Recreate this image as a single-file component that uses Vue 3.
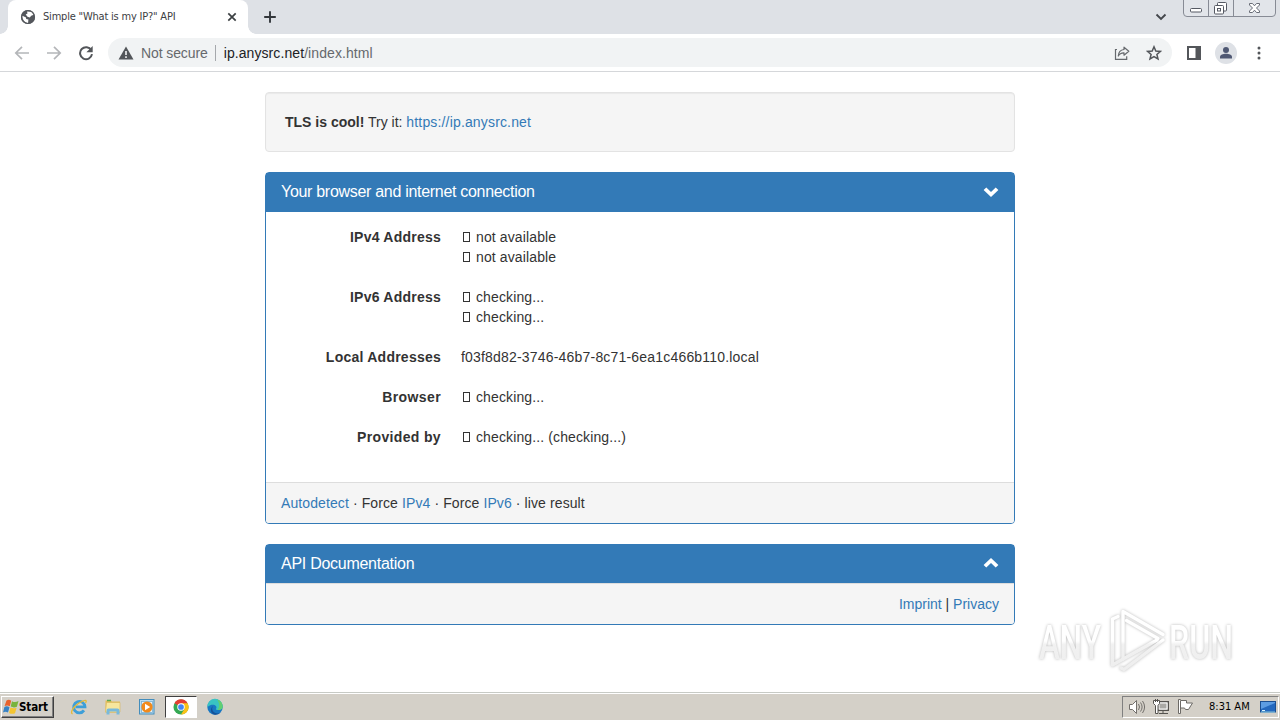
<template>
  <div class="desktop">
    <!-- Browser tab strip -->
    <header class="tab-strip">
      <div class="tab">
        <svg class="globe" viewBox="0 0 16 16" width="16" height="16">
          <circle cx="8" cy="8" r="7" fill="#54575c" />
          <path d="M2.4 6.7 6 8.4l.2 1.5 2.2.7-.3 3.4C4.6 13.5 2.2 10.5 2.4 6.7ZM7 2.4l4.5.4 2.2 3-2.5 1-1.4 1.8-2.3-.9-1.800-2.200 1.800-1Z" fill="#fff" />
          <circle cx="8" cy="8" r="6.500" fill="none" stroke="#54575c" stroke-width="1.200" />
        </svg>
        <span class="tab-title">Simple "What is my IP?" API</span>
        <svg class="tab-close" viewBox="0 0 10 10" width="10" height="10">
          <path d="M1.300 1.300 8.700 8.700M8.700 1.300 1.300 8.700" stroke="#3c4043" stroke-width="1.700" />
        </svg>
      </div>
      <svg class="new-tab" viewBox="0 0 14 14" width="14" height="14">
        <path d="M7 1.200v11.600M1.200 7h11.600" stroke="#33373c" stroke-width="1.900" />
      </svg>
      <svg class="tab-search" viewBox="0 0 12 8" width="12" height="8">
        <path d="M1.500 1.500 6 6l4.500-4.500" fill="none" stroke="#44474c" stroke-width="1.900" />
      </svg>
      <svg class="window-controls" viewBox="0 0 94 18" width="94" height="18">
        <path d="M.5 0v13q0 3.500 3.500 3.500h85q3.500 0 3.500-3.500V0M25.500 0v16.500M50.500 0v16.500" fill="#e2e5ea" stroke="#878b95" />
        <rect x="7.500" y="8.500" width="11" height="3.500" rx="1" fill="#fff" stroke="#555963" />
        <rect x="34.500" y="2.500" width="9" height="8.500" rx="1" fill="#fff" stroke="#555963" />
        <rect x="31.500" y="5.500" width="9" height="8.500" rx="1" fill="#fff" stroke="#555963" />
        <rect x="34.500" y="8.500" width="3" height="2.500" fill="#fff" stroke="#555963" />
        <path d="M66.500 3.500h3l2 2.300 2-2.300h3v1.500l-3 3 3 3v1.500h-3l-2-2.300-2 2.300h-3v-1.500l3-3-3-3Z" fill="#fff" stroke="#686c76" />
      </svg>
    </header>

    <!-- Address toolbar -->
    <nav class="toolbar">
      <svg class="nav-icon" viewBox="0 0 16 16" width="16" height="16">
        <path d="M15 8H2M8 1.800 1.800 8 8 14.200" fill="none" stroke="#b4b6b9" stroke-width="1.700" />
      </svg>
      <svg class="nav-icon" viewBox="0 0 16 16" width="16" height="16">
        <path d="M1 8h13M8 1.800 14.200 8 8 14.200" fill="none" stroke="#b4b6b9" stroke-width="1.700" />
      </svg>
      <svg class="nav-icon" viewBox="0 0 16 16" width="16" height="16">
        <path d="M13.300 5.200A6 6 0 1 0 14 9.200" fill="none" stroke="#53565a" stroke-width="2" />
        <path d="M14.700 1v6.300H8.400Z" fill="#53565a" />
      </svg>
      <div class="omnibox">
        <svg class="warning" viewBox="0 0 16 14" width="16" height="14">
          <path d="M8 .5 15.500 13.500H.5Z" fill="#53565a" />
          <path d="M8 5v4M8 10.200v1.800" stroke="#fff" stroke-width="1.500" />
        </svg>
        <span class="insecure">Not secure</span>
        <span class="divider"></span>
        <span class="url"><b>ip.anysrc.net</b>/index.html</span>
        <svg class="share" viewBox="0 0 16 16" width="16" height="16">
          <path d="M3 4.500H1.500v9.800h11.200v-3" fill="none" stroke="#66696d" stroke-width="1.200" />
          <path d="M10 2.200 14.800 6.300 10 10.200V7.800C7.500 7.700 5.500 8.700 4.300 11c.2-3.500 2.200-6.200 5.700-6.500Z" fill="none" stroke="#66696d" stroke-width="1.200" stroke-linejoin="round" />
        </svg>
        <svg class="star" viewBox="0 0 16 16" width="16" height="16">
          <path d="m8 1.800 1.800 4.200 4.600.4-3.500 3 1.100 4.500L8 11.500l-4 2.400 1.100-4.500-3.500-3 4.600-.4Z" fill="none" stroke="#53565a" stroke-width="1.500" />
        </svg>
      </div>
      <svg class="side-panel" viewBox="0 0 14 14" width="14" height="14">
        <path d="M0 0h14v14H0ZM2 2v10h6.500V2Z" fill="#53565a" fill-rule="evenodd" />
      </svg>
      <svg class="avatar" viewBox="0 0 22 22" width="22" height="22">
        <circle cx="11" cy="11" r="11" fill="#dee1e6" />
        <circle cx="11" cy="8" r="3" fill="#4f5873" />
        <path d="M5 16.500V15c0-2 3-3.200 6-3.200s6 1.200 6 3.200v1.500Z" fill="#4f5873" />
      </svg>
      <svg class="menu" viewBox="0 0 4 14" width="4" height="14">
        <circle v-for="y in [2, 7, 12]" :key="y" cx="2" :cy="y" r="1.500" fill="#53565a" />
      </svg>
    </nav>

    <!-- Page -->
    <main class="page">
      <div class="container">
        <div class="well"><strong>TLS is cool!</strong> <span class="try">Try it: <a class="tls-link">https://ip.anysrc.net</a></span></div>

        <section class="panel">
          <div class="panel-heading">
            <h3 class="browser-title">Your browser and internet connection</h3>
            <svg class="chevron" viewBox="0 0 16 10" width="16" height="10">
              <path d="M.6 3.100 3.300.4 8 4.900 12.700.4l2.700 2.700L8 10Z" fill="#fff" />
            </svg>
          </div>
          <dl class="panel-body">
            <div v-for="row in rows" :key="row.label" class="row">
              <dt :class="row.name">{{ row.label }}</dt>
              <dd>
                <div v-for="(value, i) in row.values" :key="i" class="value">
                  <i v-if="row.icon" class="missing-glyph"></i>
                  <span :class="row.textClass">{{ value }}</span>
                </div>
              </dd>
            </div>
          </dl>
          <div class="panel-footer">
            <span class="modes"><a>Autodetect</a> · Force <a>IPv4</a> · Force <a>IPv6</a> · live result</span>
          </div>
        </section>

        <section class="panel">
          <div class="panel-heading">
            <h3 class="api-title">API Documentation</h3>
            <svg class="chevron" viewBox="0 0 16 10" width="16" height="10">
              <path d="M.6 6.900 3.300 9.600 8 5.100l4.700 4.500 2.700-2.700L8 0Z" fill="#fff" />
            </svg>
          </div>
          <div class="panel-footer legal"><span><a>Imprint</a> | <a>Privacy</a></span></div>
        </section>
      </div>
    </main>

    <!-- Taskbar -->
    <footer class="taskbar">
      <button class="start">
        <svg viewBox="0 0 16 16" width="16" height="16">
          <path d="M3.500 1.500Q6 0 8.200 1.700L6.800 7.300Q4.300 5.600 1.600 7.100Z" fill="#e8622c" />
          <path d="M9 2.200Q12 4 15.500 2l-1.600 5.700q-3 1.400-6.200-.1Z" fill="#79b43d" />
          <path d="M1.400 8Q4 6.500 6.500 8.300l-1.500 5.300Q2.700 12 0 13.400Z" fill="#3682c4" />
          <path d="M7.500 8.600q3.200 1.400 6.100.1l-1.600 5.500q-3 1.400-6-.3Z" fill="#f4c531" />
        </svg>
        <span>Start</span>
      </button>
      <div class="apps">
        <span class="app">
          <svg viewBox="0 0 18 18" width="18" height="18">
            <path d="M14 12.400A5.700 5.700 0 1 1 15 8.900H5.500" fill="none" stroke="#3e9fd8" stroke-width="2.800" />
            <path d="M2.600 15.900C-.4 14.800 3.500 8.500 9 5s8.800-3.400 6.500-.2" fill="none" stroke="#e4ba38" stroke-width="1.300" />
          </svg>
        </span>
        <span class="app">
          <svg viewBox="0 0 18 18" width="18" height="18">
            <path d="M1.500 2.500H7l1 1h8v11H1.500Z" fill="#e5bd55" />
            <path d="M2.500 4.500H16V14H1.500Z" fill="#f7e69d" stroke="#d7b55c" stroke-width=".6" />
            <path d="M2.500 16.500v-4q0-2 2-2h9q2 0 2 2v4h-3v-3H5.500v3Z" fill="#79b9db" />
            <path d="M3 2.500h4" stroke="#5aa952" stroke-width="1.500" />
          </svg>
        </span>
        <span class="app">
          <svg viewBox="0 0 18 18" width="18" height="18">
            <rect x="1.500" y="1.500" width="14.500" height="14.500" fill="#b9ddf2" stroke="#438dbc" />
            <rect x="3.500" y="3.500" width="11" height="11" fill="#e5f1f8" stroke="#79afd0" stroke-width=".8" />
            <circle cx="9" cy="9" r="5.600" fill="#f18a1c" />
            <path d="m7 5.700 5.200 3.300L7 12.300Z" fill="#fff" />
          </svg>
        </span>
        <span class="app active">
          <svg viewBox="0 0 18 18" width="16" height="16">
            <circle cx="9" cy="9" r="8.500" fill="#34a853" />
            <path d="M9 9 1.600 4.700A8.500 8.500 0 0 1 16.400 4.700Z" fill="#e43e32" />
            <path d="M9 4.700h7.400A8.500 8.500 0 0 1 9 17.500l4-6.500Z" fill="#fbc116" />
            <circle cx="9" cy="9" r="4.200" fill="#fff" />
            <circle cx="9" cy="9" r="3.200" fill="#4285f4" />
          </svg>
        </span>
        <span class="app">
          <svg viewBox="0 0 18 18" width="18" height="18">
            <circle cx="9" cy="9" r="7.700" fill="#1877c2" />
            <path d="M1.300 9A7.700 7.700 0 0 1 16.700 8c.3 3-2 4.200-5.200 4-1.700-.2-2-.8-1.200-1.800C11.500 7.800 7 4.500 1.300 9Z" fill="#39c4c3" />
            <path d="M11 1.600A7.700 7.700 0 0 1 16.700 8c.3 3-2 4.200-5.200 4 2-2.500 2.500-6.500-.5-10.400Z" fill="#61cf72" />
            <path d="M7 8c-2 3 0 6.500 3.500 7.300 2 .4 4-.3 5-1.600a7.700 7.700 0 0 1-6.500 3C4 16 4 10 7 8Z" fill="#155299" />
          </svg>
        </span>
      </div>
      <div class="tray">
        <svg class="volume" viewBox="0 0 18 16" width="18" height="16">
          <path d="M1.500 5.500h3l4-4v13l-4-4h-3Z" fill="#fff" stroke="#73706c" />
          <path d="M10.500 5q2 3 0 6M12.500 3.500q3.200 4.500 0 9M14.500 2q4.200 6 0 12" fill="none" stroke="#73706c" />
        </svg>
        <svg class="network" viewBox="0 0 16 16" width="16" height="16">
          <rect x="4.500" y="2.500" width="11" height="9" fill="#aaa9a5" stroke="#55534f" />
          <path d="M6 4h8v6H6Z" stroke="#fff" fill="none" />
          <path d="M10 12v2M6 14.500h9" stroke="#55534f" />
          <path d="M.5 1.500h6v3l-1.500 2v8H2.500v-8L.5 4.500Z" fill="#fff" stroke="#55534f" />
          <path d="M2.500 0v3M4.500 0v3" stroke="#55534f" />
        </svg>
        <svg class="flag" viewBox="0 0 16 16" width="16" height="16">
          <path d="M1.500.5v14h2V9h4l1 1.500h3l4-6.500H9.500V1.500H3.500v-1Z" fill="#fff" stroke="#6d6a66" />
          <path d="M3.500 2v8" stroke="#6d6a66" />
        </svg>
        <span class="clock">8:31 AM</span>
        <svg class="show-desktop" viewBox="0 0 16 14" width="16" height="14">
          <rect x=".5" y="1.500" width="15" height="10.500" fill="#2468be" stroke="#1b4e91" />
          <path d="M1 2h14v1L1 9Z" fill="#5c9ce3" />
          <path d="M1 12h14" stroke="#8bd1ed" />
          <path d="M2 10.500h3" stroke="#d9f4ff" />
        </svg>
      </div>
    </footer>

    <!-- Watermark lying over the page -->
    <svg class="watermark" viewBox="0 0 210 76" width="210" height="76">
      <defs>
        <linearGradient id="fade" gradientUnits="userSpaceOnUse" x1="0" y1="6" x2="0" y2="66">
          <stop offset="0" stop-color="#fff" />
          <stop offset=".5" stop-color="#fff" />
          <stop offset=".56" stop-color="#f1f1f1" />
          <stop offset="1" stop-color="#eeeeee" />
        </linearGradient>
      </defs>
      <g fill="url(#fade)" class="mark-text">
        <text x="8" y="54" textLength="62" lengthAdjust="spacingAndGlyphs">ANY</text>
        <text x="138" y="54" textLength="64" lengthAdjust="spacingAndGlyphs">RUN</text>
      </g>
      <g fill="none" stroke="url(#fade)" stroke-width="3.400" stroke-linejoin="round" stroke-linecap="round">
        <path d="M87 11.500 81.500 14V60L126 35" />
        <path d="M92 54V6.500L132 29.500" />
        <path d="M95.500 15.500 127 33.500" />
        <path d="M132 35 93 64.500l-3-1.500" />
      </g>
    </svg>
  </div>
</template>

<script setup>
const rows = [
  { label: 'IPv4 Address', name: 'dt-ipv4', values: ['not available', 'not available'], icon: true, textClass: 'pending' },
  { label: 'IPv6 Address', name: 'dt-ipv6', values: ['checking...', 'checking...'], icon: true, textClass: 'pending' },
  { label: 'Local Addresses', name: 'dt-local', values: ['f03f8d82-3746-46b7-8c71-6ea1c466b110.local'], icon: false, textClass: 'local' },
  { label: 'Browser', name: 'dt-browser', values: ['checking...'], icon: true, textClass: 'pending' },
  { label: 'Provided by', name: 'dt-provider', values: ['checking... (checking...)'], icon: true, textClass: 'pending' }
]
</script>

<style>
body {
  margin: 0;
  background: #fff;
}
</style>

<style scoped>
* {
  box-sizing: border-box;
}

svg {
  display: block;
  flex: none;
}

.desktop {
  position: relative;
  display: flex;
  flex-direction: column;
  width: 1280px;
  height: 720px;
  overflow: hidden;
  background: #fff;
  font-family: 'Liberation Sans', Arial, sans-serif;
  font-size: 14px;
  line-height: 20px;
  color: #333;
  white-space: nowrap;
}

/* Tab strip */
.tab-strip {
  display: flex;
  height: 34px;
  background: #dee1e6;
}

.tab {
  position: relative;
  display: flex;
  align-items: center;
  width: 240px;
  height: 34px;
  margin-left: 8px;
  padding: 0 11px 0 12px;
  background: #fff;
  border-radius: 8px 8px 0 0;
}

.tab::before,
.tab::after {
  content: '';
  position: absolute;
  bottom: 0;
  width: 8px;
  height: 8px;
}

.tab::before {
  left: -8px;
  background: radial-gradient(circle at 0 0, transparent 7.5px, #fff 8px);
}

.tab::after {
  right: -8px;
  background: radial-gradient(circle at 100% 0, transparent 7.5px, #fff 8px);
}

.tab-title {
  flex: 1;
  margin-left: 7px;
  font-family: 'DejaVu Sans Condensed', 'DejaVu Sans', sans-serif;
  font-stretch: condensed;
  font-size: 11px;
  letter-spacing: -0.2px;
  color: #3c4043;
}

.new-tab {
  margin: 10px 0 0 15px;
}

.tab-search {
  margin: 13px 16px 0 auto;
}

.window-controls {
  margin-right: 3px;
}

/* Toolbar */
.toolbar {
  display: flex;
  align-items: center;
  height: 38px;
  padding-left: 14px;
  border-bottom: 1px solid #d5d7da;
  background: #fff;
}

.nav-icon {
  margin-right: 16px;
}

.omnibox {
  display: flex;
  align-items: center;
  width: 1064px;
  height: 29px;
  margin-left: -2px;
  padding: 0 10px;
  border-radius: 15px;
  background: #f1f3f4;
}

.insecure {
  margin-left: 7px;
  color: #66696d;
  letter-spacing: -0.1px;
}

.divider {
  width: 1px;
  height: 16px;
  margin: 0 8px 0 7px;
  background: #a5a8ac;
}

.url {
  flex: 1;
  color: #66696d;
  letter-spacing: 0.08px;
}

.url b {
  font-weight: 400;
  color: #202124;
}

.share {
  margin-right: 16px;
}

.side-panel {
  margin-left: 15px;
}

.avatar {
  margin-left: 14px;
}

.menu {
  margin-left: 20px;
}

/* Page content */
.page {
  height: 620px;
  padding-top: 20px;
}

.container {
  width: 750px;
  margin: 0 auto;
}

a {
  color: #337ab7;
}

.well {
  height: 60px;
  margin-bottom: 20px;
  padding: 19px;
  border: 1px solid #e3e3e3;
  border-radius: 4px;
  background: #f5f5f5;
  box-shadow: inset 0 1px 1px rgba(0, 0, 0, 0.05);
}

.tls-link {
  letter-spacing: 0.16px;
}

.panel {
  margin-bottom: 20px;
  border: 1px solid #337ab7;
  border-radius: 4px;
  background: #fff;
}

.panel-heading {
  display: flex;
  align-items: center;
  justify-content: space-between;
  height: 38.6px;
  padding: 0 15.5px 1px 15px;
  background: #337ab7;
}

.panel-heading h3 {
  margin: 0;
  font-size: 16px;
  font-weight: 400;
  line-height: 18px;
  letter-spacing: -0.3px;
  color: #fff;
}

.panel-heading .api-title {
  padding-top: 1px;
  letter-spacing: -0.27px;
}

.panel-body {
  display: flex;
  flex-direction: column;
  gap: 20px;
  height: 270px;
  margin: 0;
  padding: 15px;
}

.row {
  display: flex;
}

dt {
  width: 160px;
  text-align: right;
  font-weight: 700;
  letter-spacing: 0.24px;
}

.dt-browser {
  letter-spacing: 0.4px;
}

.dt-provider {
  letter-spacing: 0.35px;
}

dd {
  margin: 0 0 0 20px;
}

.value {
  display: flex;
  align-items: center;
}

.missing-glyph {
  width: 7px;
  height: 10px;
  margin: 0 6px 0 2px;
  border: 1px solid #333;
}

.pending {
  letter-spacing: 0.12px;
}

.local {
  letter-spacing: 0.19px;
}

.panel-footer {
  height: 41px;
  padding: 10px 15px;
  border-top: 1px solid #ddd;
  border-radius: 0 0 3px 3px;
  background: #f5f5f5;
}

.modes {
  letter-spacing: 0.1px;
}

.legal {
  text-align: right;
}

/* Taskbar */
.taskbar {
  display: flex;
  align-items: center;
  height: 28px;
  padding: 2px 1px 2px;
  background: #d4d0c8;
  border-top: 1px solid #c7cac5;
  box-shadow: inset 0 1px #fff;
}

.start {
  display: flex;
  align-items: center;
  width: 53px;
  height: 22px;
  padding: 0 1px;
  border: 1px solid;
  border-color: #fff #404040 #404040 #fff;
  background: #d4d0c8;
  box-shadow: inset -1px -1px #808080;
  font-family: 'DejaVu Sans Condensed', 'DejaVu Sans', sans-serif;
  font-stretch: condensed;
  font-size: 11.5px;
  font-weight: 700;
  letter-spacing: -0.1px;
  color: #000;
}

.apps {
  display: flex;
  gap: 2px;
  margin-left: 9px;
}

.app {
  display: flex;
  align-items: center;
  justify-content: center;
  width: 32px;
  height: 22px;
}

.app.active {
  border: 1px solid;
  border-color: #404040 #fff #fff #404040;
  background: #fff;
}

.tray {
  display: flex;
  align-items: center;
  width: 157px;
  height: 22px;
  margin-left: auto;
  padding-left: 5px;
  border: 1px solid;
  border-color: #808080 #fff #fff #808080;
}

.network {
  margin-left: 7px;
}

.flag {
  margin-left: 8px;
}

.clock {
  width: 42px;
  margin-left: 16px;
  font-family: 'DejaVu Sans Condensed', 'DejaVu Sans', sans-serif;
  font-stretch: condensed;
  font-size: 11px;
  letter-spacing: 0;
  color: #000;
}

.show-desktop {
  margin-left: 9px;
}

/* Watermark */
.watermark {
  position: absolute;
  left: 1031px;
  top: 605px;
  overflow: visible;
  filter: drop-shadow(0 0 1.5px rgba(0, 0, 0, 0.28));
}

.mark-text {
  font-family: Roboto, sans-serif;
  font-size: 48px;
  line-height: 1;
  font-weight: 500;
}
</style>
